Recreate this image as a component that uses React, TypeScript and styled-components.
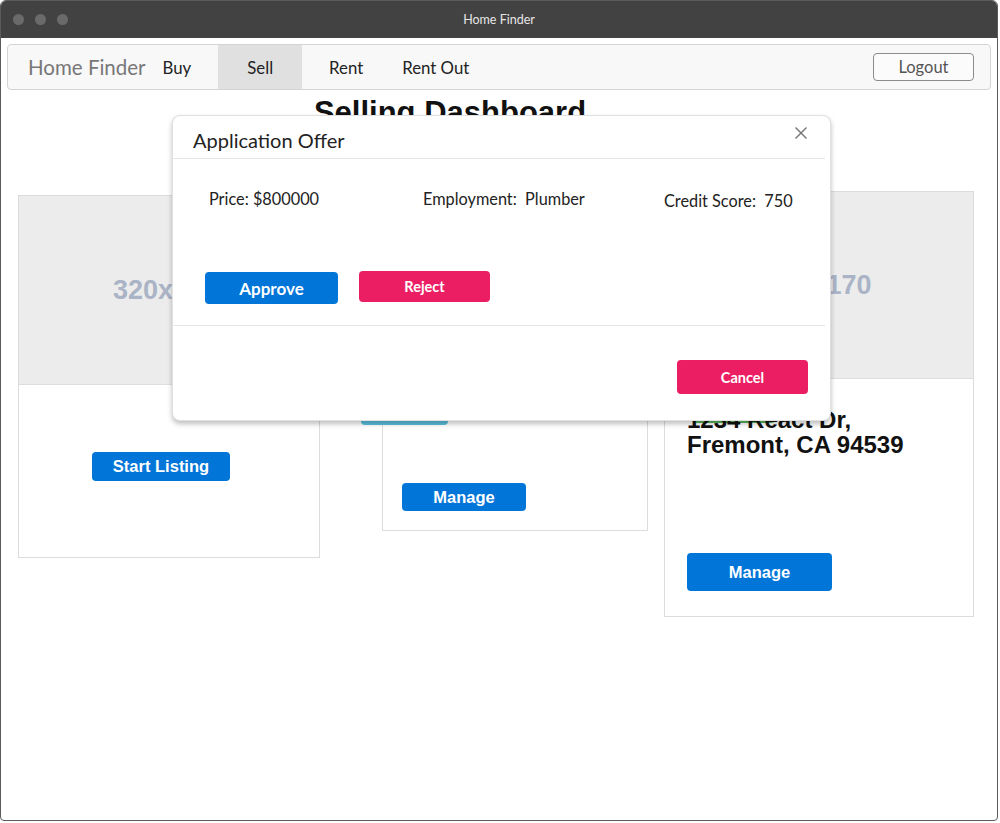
import React from "react"
import styled, { createGlobalStyle } from "styled-components"

const GlobalStyle = createGlobalStyle`
  html, body {
    margin: 0;
    padding: 0;
    background: #fff;
  }
  body {
    font-family: "Lato", "Liberation Sans", sans-serif;
    color: #222;
  }
  * { box-sizing: border-box; }
`

const Window = styled.div`
  position: relative;
  width: 998px;
  height: 821px;
  border: 1px solid #5b5b5b;
  border-radius: 6px 6px 4px 4px;
  overflow: hidden;
  background: #fff;
`

const TitleBar = styled.div`
  height: 37px;
  background: #424242;
  display: grid;
  grid-template-columns: 1fr auto 1fr;
  align-items: center;
  padding: 0 12px;
`

const Dots = styled.div`
  display: flex;
  gap: 11px;
`

const Dot = styled.span`
  width: 11px;
  height: 11px;
  border-radius: 50%;
  background: #6a6a6a;
`

const WindowTitle = styled.div`
  font-size: 12.5px;
  color: #e6e6e6;
`

const Navbar = styled.nav`
  margin: 6px 6px 0;
  height: 46px;
  display: flex;
  align-items: stretch;
  background: #f8f8f8;
  border: 1px solid #d4d4d4;
  border-radius: 4px;
  padding-left: 20px;
`

const Brand = styled.div`
  display: flex;
  align-items: center;
  font-size: 20.5px;
  color: #777;
  margin-right: 5px;
`

const NavLinks = styled.div`
  display: flex;
  align-items: stretch;
  gap: 15px;
`

const NavLink = styled.div<{ $active?: boolean }>`
  display: flex;
  align-items: center;
  font-size: 16.8px;
  color: #222;
  padding: 0 ${p => (p.$active ? "29px" : "12px")};
  background: ${p => (p.$active ? "#e0e0e0" : "transparent")};
`

const LogoutButton = styled.button`
  margin: auto 16px auto auto;
  width: 101px;
  height: 28px;
  border: 1px solid #8c8c8c;
  border-radius: 4px;
  background: #fbfbfb;
  color: #555;
  font-family: "Lato", sans-serif;
  font-size: 16.5px;
  padding: 0;
`

const Main = styled.main`
  position: relative;
`

const Heading = styled.h1`
  width: 898px;
  margin: 6px 0 0;
  text-align: center;
  font-family: "Liberation Sans", Arial, sans-serif;
  font-size: 31px;
  line-height: 34px;
  font-weight: 700;
  color: #111;
`

const CardRow = styled.div`
  display: flex;
  align-items: flex-start;
  margin-top: 61px;
  padding-left: 17px;
`

const Card = styled.div<{ $w: number; $ml?: number; $mt?: number }>`
  width: ${p => p.$w}px;
  margin-left: ${p => p.$ml ?? 0}px;
  margin-top: ${p => p.$mt ?? 0}px;
  border: 1px solid #dcdcdc;
  background: #fff;
`

const Placeholder = styled.div<{ $h: number; $shift?: number }>`
  height: ${p => p.$h}px;
  padding-right: ${p => p.$shift ?? 0}px;
  background: #ececec;
  border-bottom: 1px solid #dedede;
  display: flex;
  align-items: center;
  justify-content: center;
  font-family: "Liberation Sans", Arial, sans-serif;
  font-weight: 700;
  font-size: 27px;
  color: #aab4c6;
`

const CardBody = styled.div<{ $pad: string; $center?: boolean }>`
  position: relative;
  padding: ${p => p.$pad};
  display: flex;
  flex-direction: column;
  align-items: ${p => (p.$center ? "center" : "flex-start")};
`

const Badge = styled.span<{ $color: string; $top: number; $left: number; $w: number; $h: number }>`
  position: absolute;
  top: ${p => p.$top}px;
  left: ${p => p.$left}px;
  width: ${p => p.$w}px;
  height: ${p => p.$h}px;
  border-radius: 4px;
  background: ${p => p.$color};
`

const Address = styled.div`
  position: relative;
  margin-top: 28px;
  font-family: "Liberation Sans", Arial, sans-serif;
  font-weight: 700;
  font-size: 24px;
  line-height: 25px;
  color: #111;
`

const CardButton = styled.button<{ $w: number; $h: number; $mt?: number }>`
  width: ${p => p.$w}px;
  height: ${p => p.$h}px;
  margin-top: ${p => p.$mt ?? 0}px;
  border: none;
  border-radius: 4px;
  background: #0275d8;
  color: #fff;
  font-family: "Liberation Sans", Arial, sans-serif;
  font-weight: 700;
  font-size: 16.5px;
  padding: 0;
`

const Modal = styled.div`
  position: absolute;
  top: 114px;
  left: 171px;
  width: 659px;
  background: #fff;
  border: 1px solid rgba(0, 0, 0, 0.12);
  border-radius: 8px;
  box-shadow: 0 3px 5px rgba(0, 0, 0, 0.25);
`

const ModalHeader = styled.div`
  display: flex;
  justify-content: space-between;
  align-items: flex-start;
  margin-right: 5px;
  padding: 12px 17px 6px 20px;
  border-bottom: 1px solid #e6e6e6;
`

const ModalTitle = styled.div`
  font-size: 20px;
  line-height: 24px;
  color: #222;
`

const CloseButton = styled.button`
  margin-top: -2px;
  width: 14px;
  height: 14px;
  padding: 0;
  border: none;
  background: none;
  display: flex;
`

const ModalBody = styled.div`
  margin-right: 5px;
  padding: 30px 0 21px 32px;
  border-bottom: 1px solid #e6e6e6;
`

const InfoRow = styled.div`
  display: grid;
  grid-template-columns: 214px 241px auto;
  align-items: start;
  height: 19px;
  padding-left: 4px;
  font-size: 16.3px;
  line-height: 19px;
  color: #222;
`

const InfoCell = styled.div<{ $mt?: number }>`
  margin-top: ${p => p.$mt ?? 0}px;
  white-space: pre;
`

const ButtonRow = styled.div`
  display: flex;
  align-items: flex-start;
  gap: 21px;
  margin-top: 63px;
`

const ModalButton = styled.button<{ $bg: string; $w: number; $h: number; $mt?: number; $fs?: number }>`
  width: ${p => p.$w}px;
  height: ${p => p.$h}px;
  margin-top: ${p => p.$mt ?? 0}px;
  border: none;
  border-radius: 4px;
  background: ${p => p.$bg};
  color: #fff;
  font-family: "Lato", sans-serif;
  font-weight: 700;
  font-size: ${p => p.$fs ?? 14.5}px;
  padding: 0;
`

const ModalFooter = styled.div`
  display: flex;
  justify-content: flex-end;
  padding: 34px 22px 26px;
`

const BLUE = "#0275d8"
const PINK = "#eb1e63"

const CloseIcon = () => (
  <svg width="14" height="14" viewBox="0 0 14 14" fill="none" stroke="#777" strokeWidth="1.4">
    <line x1="1.5" y1="1.5" x2="12.5" y2="12.5" />
    <line x1="12.5" y1="1.5" x2="1.5" y2="12.5" />
  </svg>
)

const App = () => {
  return (
    <>
      <GlobalStyle />
      <Window>
        <TitleBar>
          <Dots>
            <Dot />
            <Dot />
            <Dot />
          </Dots>
          <WindowTitle>Home Finder</WindowTitle>
          <div />
        </TitleBar>
        <Navbar>
          <Brand>Home Finder</Brand>
          <NavLinks>
            <NavLink>Buy</NavLink>
            <NavLink $active>Sell</NavLink>
            <NavLink>Rent</NavLink>
            <NavLink>Rent Out</NavLink>
          </NavLinks>
          <LogoutButton>Logout</LogoutButton>
        </Navbar>
        <Main>
          <Heading>Selling Dashboard</Heading>
          <CardRow>
            <Card $w={302} $mt={4}>
              <Placeholder $h={189} $shift={7}>320x170</Placeholder>
              <CardBody $pad="67px 16px 76px 0" $center>
                <CardButton $w={138} $h={29}>Start Listing</CardButton>
              </CardBody>
            </Card>
            <Card $w={266} $ml={62} $mt={4}>
              <Placeholder $h={191}>320x170</Placeholder>
              <CardBody $pad="96px 19px 19px">
                <Badge $color="#5bc0de" $top={16} $left={-22} $w={87} $h={22} />
                <CardButton $w={124} $h={28}>Manage</CardButton>
              </CardBody>
            </Card>
            <Card $w={310} $ml={16}>
              <Placeholder $h={187}>320x170</Placeholder>
              <CardBody $pad="0 22px 25px">
                <Badge $color="#5cb85c" $top={21} $left={28} $w={82} $h={23} />
                <Address>
                  1234 React Dr,
                  <br />
                  Fremont, CA 94539
                </Address>
                <CardButton $w={145} $h={38} $mt={96}>Manage</CardButton>
              </CardBody>
            </Card>
          </CardRow>
        </Main>
        <Modal>
          <ModalHeader>
            <ModalTitle>Application Offer</ModalTitle>
            <CloseButton aria-label="Close">
              <CloseIcon />
            </CloseButton>
          </ModalHeader>
          <ModalBody>
            <InfoRow>
              <InfoCell>Price: $800000</InfoCell>
              <InfoCell>Employment:  Plumber</InfoCell>
              <InfoCell $mt={2}>Credit Score:  750</InfoCell>
            </InfoRow>
            <ButtonRow>
              <ModalButton $bg={BLUE} $w={133} $h={32} $mt={1} $fs={17}>Approve</ModalButton>
              <ModalButton $bg={PINK} $w={131} $h={31}>Reject</ModalButton>
            </ButtonRow>
          </ModalBody>
          <ModalFooter>
            <ModalButton $bg={PINK} $w={131} $h={34}>Cancel</ModalButton>
          </ModalFooter>
        </Modal>
      </Window>
    </>
  )
}

export default App
